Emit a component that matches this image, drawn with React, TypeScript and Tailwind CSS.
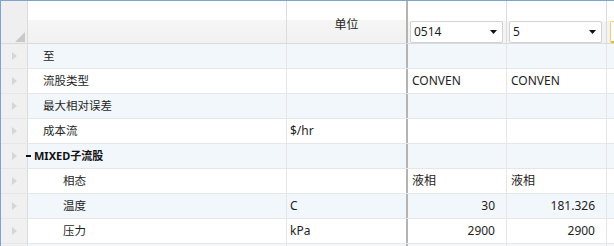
import React from "react";

type Row = {
  name: string;
  level: 0 | 1 | 2;
  unit?: string;
  a?: string;
  b?: string;
  align?: "left" | "right";
  blue: boolean;
  bold?: boolean;
};

const rows: Row[] = [
  { name: "至", level: 1, blue: true },
  { name: "流股类型", level: 1, a: "CONVEN", b: "CONVEN", blue: false },
  { name: "最大相对误差", level: 1, blue: true },
  { name: "成本流", level: 1, unit: "$/hr", blue: false },
  { name: "MIXED子流股", level: 0, blue: true, bold: true },
  { name: "相态", level: 2, a: "液相", b: "液相", blue: false },
  { name: "温度", level: 2, unit: "C", a: "30", b: "181.326", align: "right", blue: true },
  { name: "压力", level: 2, unit: "kPa", a: "2900", b: "2900", align: "right", blue: false },
  { name: "", level: 2, blue: true },
];

function Arrow() {
  return (
    <svg width="5" height="8" viewBox="0 0 5 8" className="ml-[11px]">
      <path d="M0 0 L5 4 L0 8 Z" fill="#d6d6d6" />
    </svg>
  );
}

function Dropdown({ value }: { value: string }) {
  return (
    <div className="flex h-[22px] w-[93px] items-center justify-between rounded-[2px] border border-[#d2d2d2] bg-white pl-[3px] pr-[5px] text-[12px] text-[#1e1e1e]">
      <span>{value}</span>
      <svg width="7" height="4" viewBox="0 0 7 4">
        <path d="M0 0 L7 0 L3.5 4 Z" fill="#111" />
      </svg>
    </div>
  );
}

export default function App() {
  return (
    <div className="h-[246px] w-[614px] overflow-hidden bg-white font-['Noto_Sans','Noto_Sans_CJK_SC',sans-serif] text-[12px] text-[#1e1e1e]">
      <div className="flex w-[700px] flex-col border-l border-t border-[#7fa3cf]">
        {/* Header */}
        <div className="flex h-[43px] border-b border-[#dadada]">
          <div className="relative h-full w-[27px] shrink-0 border-r border-[#dcdcdc] bg-[#efefef]">
            <svg width="10" height="10" viewBox="0 0 10 10" className="absolute left-[14px] top-[31px]">
              <path d="M10 0 L10 10 L0 10 Z" fill="#c9c9c9" />
            </svg>
          </div>
          <div className="flex h-full w-[259px] shrink-0 flex-col border-r border-[#dcdcdc]">
            <div className="h-[19px] bg-white" />
            <div className="flex-1 bg-gradient-to-b from-[#f6f6f6] to-[#f1f1f1]" />
          </div>
          <div className="relative flex h-full w-[121px] shrink-0 flex-col border-r-2 border-[#b4b4b4]">
            <div className="h-[19px] bg-white" />
            <div className="flex-1 bg-gradient-to-b from-[#f6f6f6] to-[#f1f1f1]" />
            <div className="absolute left-0 right-0 top-[17px] text-center text-[12px] leading-[14px]">单位</div>
          </div>
          <div className="flex h-full w-[99px] shrink-0 flex-col border-r border-[#dcdcdc]">
            <div className="h-[20px] bg-white" />
            <div className="flex flex-1 items-start bg-[#f3f3f3] pl-[2px]">
              <Dropdown value="0514" />
            </div>
          </div>
          <div className="flex h-full w-[100px] shrink-0 flex-col border-r border-[#dcdcdc]">
            <div className="h-[20px] bg-white" />
            <div className="flex flex-1 items-start bg-[#f3f3f3] pl-[2px]">
              <Dropdown value="5" />
            </div>
          </div>
          <div className="flex h-full flex-1 flex-col">
            <div className="h-[20px] bg-white" />
            <div className="flex flex-1 items-start bg-[#f3f3f3] pl-[3px]">
              <div className="h-[22px] w-[60px] rounded-[2px] border border-[#f2d661] border-b-2 border-b-[#f0b82a] bg-white" />
            </div>
          </div>
        </div>
        {/* Body rows */}
        {rows.map((r, i) => (
          <div
            key={i}
            className={`flex h-[25px] border-b border-[#e6e6e6] ${r.blue ? "bg-[#f2f7fc]" : "bg-white"}`}
          >
            <div className="flex h-full w-[27px] shrink-0 items-center border-r border-[#dcdcdc] bg-[#f0f0f0]">
              <Arrow />
            </div>
            <div className="relative flex h-full w-[259px] shrink-0 items-center border-r border-[#e6e6e6]">
              {r.level === 0 ? (
                <div className="relative left-[-2px] flex items-center">
                  <span className="mr-[3px] h-[2px] w-[5px] bg-[#111]" />
                  <span className="text-[11px] font-bold text-[#111]">{r.name}</span>
                </div>
              ) : (
                <span className={`text-[11.5px] ${r.level === 1 ? "pl-[15px]" : "pl-[35px]"}`}>{r.name}</span>
              )}
            </div>
            <div className="flex h-full w-[121px] shrink-0 items-center border-r-2 border-[#b4b4b4] pl-[3px]">
              {r.unit}
            </div>
            <div
              className={`flex h-full w-[99px] shrink-0 items-center border-r border-[#e6e6e6] ${
                r.align === "right" ? "justify-end pr-[11px]" : "pl-[4px]"
              }`}
            >
              {r.a}
            </div>
            <div
              className={`flex h-full w-[100px] shrink-0 items-center border-r border-[#e6e6e6] ${
                r.align === "right" ? "justify-end pr-[11px]" : "pl-[4px]"
              }`}
            >
              {r.b}
            </div>
            <div className="h-full flex-1" />
          </div>
        ))}
      </div>
    </div>
  );
}
